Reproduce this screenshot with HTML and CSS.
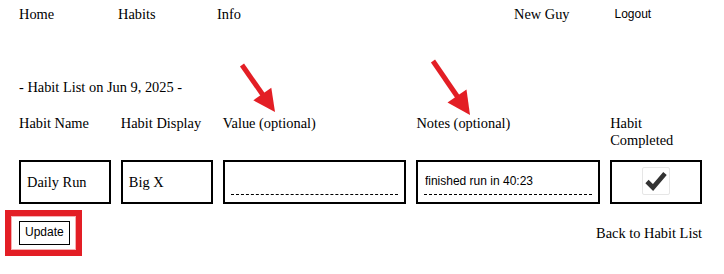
FILE: index.html
```html
<!DOCTYPE html>
<html lang="en">
<head>
<meta charset="utf-8">
<title>Habit List</title>
<link rel="stylesheet" href="styles.css">
</head>
<body>
<div class="page">
  <nav class="nav">
    <a class="nav-link" href="#">Home</a>
    <a class="nav-link" href="#">Habits</a>
    <a class="nav-link" href="#">Info</a>
    <span class="nav-spacer"></span>
    <span class="nav-spacer"></span>
    <a class="nav-link" href="#">New Guy</a>
    <button class="logout" type="button">Logout</button>
  </nav>

  <h2 class="title">- Habit List on Jun 9, 2025 -</h2>

  <div class="grid headers">
    <div class="head">Habit Name</div>
    <div class="head">Habit Display</div>
    <div class="head">Value (optional)</div>
    <div class="head">Notes (optional)</div>
    <div class="head">Habit Completed</div>
  </div>

  <div class="grid cells">
    <div class="cell">Daily Run</div>
    <div class="cell">Big X</div>
    <div class="cell cell-input"><input class="field" type="text" value=""></div>
    <div class="cell cell-input"><input class="field" type="text" value="finished run in 40:23"></div>
    <div class="cell cell-check">
      <span class="checkbox">
        <svg class="check-icon" viewBox="0 0 28 28" width="28" height="28" aria-hidden="true">
          <polyline points="5,14.5 11,20.5 23,6.5" fill="none" stroke="#333" stroke-width="4.6" stroke-linecap="butt" stroke-linejoin="miter"/>
        </svg>
      </span>
    </div>
  </div>

  <div class="actions">
    <button class="update" type="button">Update</button>
    <a class="back" href="#">Back to Habit List</a>
  </div>
</div>

<div class="annot-box"></div>
<svg class="annot-arrows" viewBox="0 0 724 274" width="724" height="274" aria-hidden="true">
  <line x1="242" y1="65" x2="264" y2="96.5" stroke="#e31e25" stroke-width="5"/>
  <polygon points="275,112 271.3,87.7 253.3,100.3" fill="#e31e25"/>
  <line x1="433" y1="61" x2="459" y2="99" stroke="#e31e25" stroke-width="5"/>
  <polygon points="470,115 466.5,89.5 447.5,102.5" fill="#e31e25"/>
</svg>
</body>
</html>
```

FILE: styles.css
```css
html, body {
  margin: 0;
  padding: 0;
  background: #fff;
}

body {
  font-family: "Liberation Serif", "Times New Roman", serif;
  font-size: 14.4px;
  line-height: 17px;
  color: #000;
  width: 724px;
  height: 274px;
  overflow: hidden;
}

.page {
  padding: 6px 22px 0 19px;
}

.nav {
  display: grid;
  grid-template-columns: repeat(7, 99px);
  align-items: start;
}

.nav-link {
  color: #000;
  text-decoration: none;
}

.logout {
  font-family: "Liberation Sans", Arial, sans-serif;
  font-size: 12px;
  line-height: 15px;
  padding: 1px 0 0 1.5px;
  margin: 0;
  border: 0;
  background: none;
  color: #000;
  text-align: left;
  justify-self: start;
}

.title {
  font-size: 14.4px;
  font-weight: normal;
  line-height: 17px;
  margin: 56px 0 0 0;
}

.grid {
  display: grid;
  grid-template-columns: 1fr 1fr 2fr 2fr 1fr;
  column-gap: 10px;
}

.headers {
  margin-top: 19px;
}

.cells {
  margin-top: 11px;
}

.cell {
  box-sizing: border-box;
  height: 44px;
  border: 2px solid #000;
  padding: 0 6px;
  display: flex;
  align-items: center;
}

.cell-input {
  align-items: flex-end;
  padding-bottom: 7px;
}

.field {
  display: block;
  box-sizing: border-box;
  width: 100%;
  margin: 0;
  padding: 0 0 5px 0.5px;
  border: 0;
  border-bottom: 1px dashed #000;
  background: transparent;
  outline: none;
  font-family: "Liberation Sans", Arial, sans-serif;
  font-size: 12px;
  line-height: 15px;
  color: #000;
}

.cell-check {
  justify-content: center;
  padding: 0;
}

.checkbox {
  box-sizing: border-box;
  width: 28px;
  height: 28px;
  margin-top: -2px;
  border: 1px solid #e6e6e6;
  border-radius: 2px;
  background: #fff;
  display: flex;
  align-items: center;
  justify-content: center;
}

.check-icon {
  display: block;
  margin: -1px;
}

.actions {
  margin-top: 17px;
  display: flex;
  justify-content: space-between;
  align-items: center;
}

.update {
  font-family: "Liberation Sans", Arial, sans-serif;
  font-size: 12px;
  line-height: 14px;
  padding: 3px 5px 5px;
  margin: 0;
  border: 1px solid #000;
  border-radius: 0;
  background: #fff;
  color: #000;
}

.back {
  color: #000;
  text-decoration: none;
}

.annot-box {
  position: absolute;
  left: 5px;
  top: 210px;
  width: 77px;
  height: 46px;
  box-sizing: border-box;
  border: 6px solid #e31e25;
  box-shadow: inset 0 0 0 1px rgba(227, 30, 37, 0.35);
}

.annot-arrows {
  position: absolute;
  left: 0;
  top: 0;
  pointer-events: none;
}
```
